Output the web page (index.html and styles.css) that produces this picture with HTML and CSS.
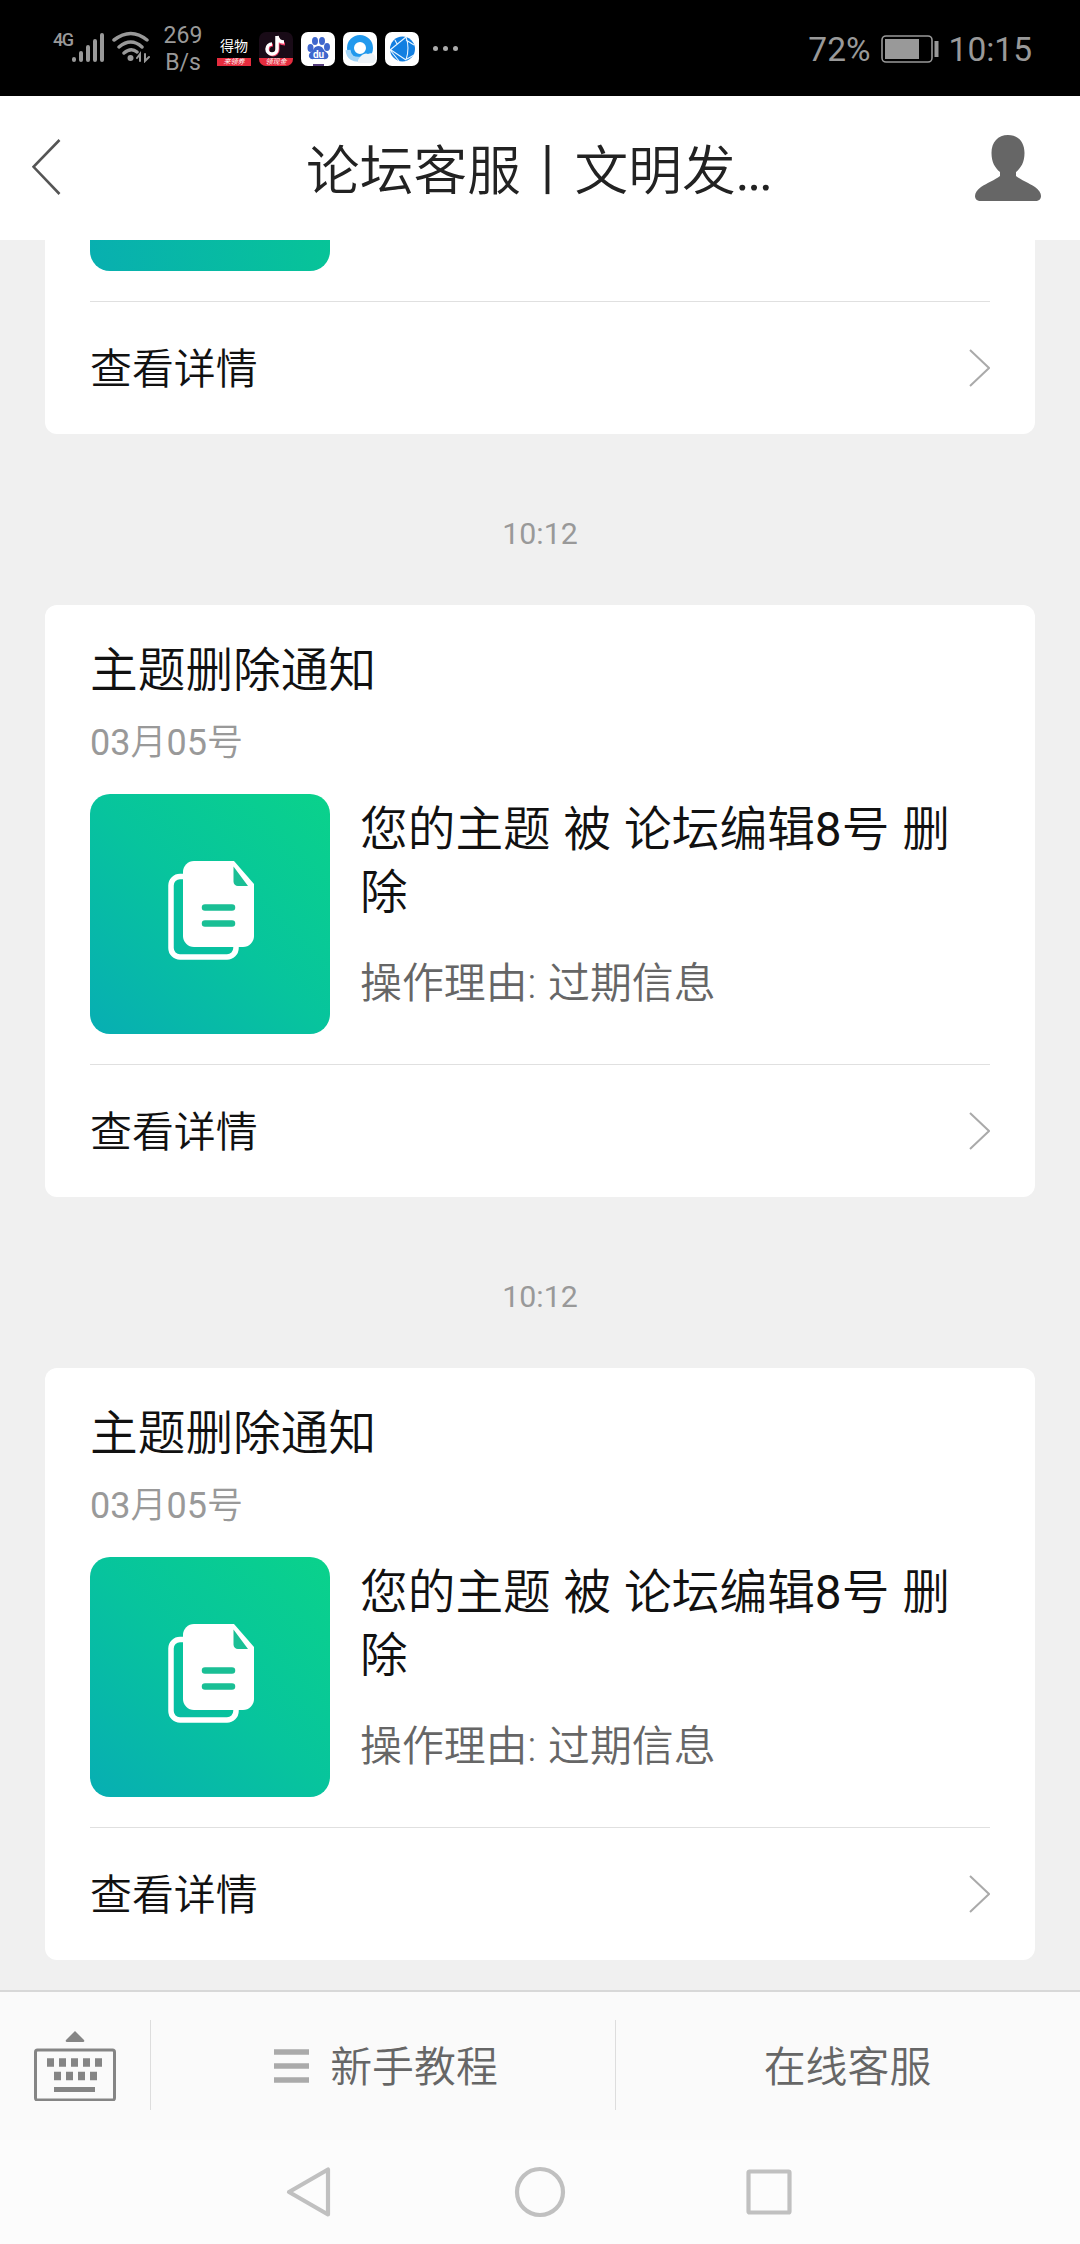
FILE: index.html
```html
<!DOCTYPE html>
<html lang="zh-CN">
<head>
<meta charset="utf-8">
<title>论坛客服</title>
<link rel="stylesheet" href="styles.css">
</head>
<body>
<svg class="defs" width="0" height="0" aria-hidden="true">
  <symbol id="docs" viewBox="0 0 86 100">
    <path d="M17 15.500H12A9 9 0 0 0 3 24.500V87A9 9 0 0 0 12 96H59A9 9 0 0 0 68 87V85" fill="none" stroke="#fff" stroke-width="5.500"/>
    <path d="M26 0H66L86 23V75A11 11 0 0 1 75 86H26A11 11 0 0 1 15 75V11A11 11 0 0 1 26 0Z" fill="#fff"/>
    <path d="M65.500 5.500L80 25H70A4.500 4.500 0 0 1 65.500 20.500Z" fill="#1abf95"/>
    <path d="M37 46.500H64M37 62.500H64" stroke="#1abf95" stroke-width="6.500" stroke-linecap="round"/>
  </symbol>
</svg>
<div class="screen">
  <div class="status">
    <div class="status-left">
      <span class="net">4G</span>
      <svg class="signal" width="34" height="32" viewBox="0 0 34 32" fill="none" stroke="#999" stroke-width="4" stroke-linecap="round"><path d="M3 27V28M10 21V28M17 15V28M24 9V28M31 3V28"/></svg>
      <svg class="wifi" width="38" height="32" viewBox="0 0 38 32" fill="none" stroke="#999" stroke-width="3.500" stroke-linecap="round"><path d="M2 9Q19-4 35 9M7 16Q19 6 30 16M12 22Q19 16 25 21"/><circle cx="18.500" cy="27" r="3" fill="#999" stroke="none"/><path d="M28 30V23L25 27M33 23V30L37 26" stroke-width="2"/></svg>
      <span class="speed"><span>269</span><span>B/s</span></span>
      <span class="apps">
        <span class="app app-dewu"><b>得物</b><i>来领券</i></span>
        <span class="app app-tiktok"><svg width="34" height="26" viewBox="0 0 34 26" fill="none"><path d="M18 5V17A5 5 0 1 1 13 12M18 5Q19 11 25 11" stroke="#ee4068" stroke-width="3" transform="translate(1 1)"/><path d="M18 4V17A5 5 0 1 1 13 12M18 4Q19 10 25 10" stroke="#fff" stroke-width="3.500"/></svg><i>领现金</i></span>
        <span class="app app-baidu"><svg width="34" height="34" viewBox="0 0 34 34" fill="#3f67cd"><ellipse cx="9.500" cy="16" rx="3" ry="4"/><ellipse cx="14" cy="9" rx="3" ry="4"/><ellipse cx="21" cy="9" rx="3" ry="4"/><ellipse cx="26" cy="15" rx="3" ry="4"/><path d="M17.500 14C13 14 13 18 10 20C6 23 8 28 13 27H22C28 28 29 23 25 20C22 18 22 14 17.500 14Z"/><path d="M12 32H23V34H12Z" fill="#533b79"/><text x="17.500" y="26" text-anchor="middle" class="du">du</text></svg></span>
        <span class="app"><svg width="34" height="34" viewBox="0 0 34 34"><circle cx="17" cy="16" r="9.500" fill="none" stroke="#2299ed" stroke-width="7"/><path d="M5 18Q6 29 19 27" fill="none" stroke="#a3d5f7" stroke-width="5"/><path d="M15 28Q20 20 25 22Q31 19 33 27L31 31H15Z" fill="#eef3f7"/></svg></span>
        <span class="app"><svg width="34" height="34" viewBox="0 0 34 34"><circle cx="17.500" cy="17" r="12.500" fill="#127fe1"/><path d="M5 18L21 5M6 18L21 28M21 5Q25 16 21 28M21 8L29 13M22 27L29 23M10 8L12 12M5 18L14 29" fill="none" stroke="#e8f5ff" stroke-width="1.100"/></svg></span>
      </span>
      <span class="more"><u></u><u></u><u></u></span>
    </div>
    <div class="status-right">
      <span>72%</span>
      <svg width="58" height="28" viewBox="0 0 58 28"><rect x="1" y="1" width="50" height="26" rx="4" fill="none" stroke="#999" stroke-width="1.600"/><path d="M4 4H38V24H4ZM53.500 6H57.500V22H53.500Z" fill="#999"/></svg>
      <span>10:15</span>
    </div>
  </div>

  <header class="header">
    <svg class="back" width="30" height="56" viewBox="0 0 30 56"><path d="M27.500 1L1.500 27.800L27.500 55" fill="none" stroke="#555" stroke-width="2.600"/></svg>
    <h1>论坛客服丨文明发<span class="dots">...</span></h1>
    <svg class="person" width="66" height="66" viewBox="0 0 66 66"><path d="M33 0C43 0 49.500 7 49.500 18C49.500 27 46 33 41 37V41C46 45 54 48 60 52C64 55 66 58 66 61C66 64 64 66 60 66H6C2 66 0 64 0 61C0 58 2 55 6 52C12 48 20 45 25 41V37C20 33 16.500 27 16.500 18C16.500 7 23 0 33 0Z" fill="#666"/></svg>
  </header>

  <main class="feed">
    <section class="card card-cut">
      <div class="tile"></div>
      <a class="detail"><span>查看详情</span><svg width="22" height="38" viewBox="0 0 22 38"><path d="M2 1L21 19L2 37" fill="none" stroke="#aaa" stroke-width="2"/></svg></a>
    </section>
    <time>10:12</time>
    <section class="card">
      <h2>主题删除通知</h2>
      <p class="date"><span class="num">03</span>月<span class="num">05</span>号</p>
      <div class="body">
        <div class="tile"><svg width="86" height="100"><use href="#docs"/></svg></div>
        <div class="copy"><p class="subject">您的主题 被 论坛编辑<span class="num">8</span>号 删除</p><p class="reason">操作理由: 过期信息</p></div>
      </div>
      <a class="detail"><span>查看详情</span><svg width="22" height="38" viewBox="0 0 22 38"><path d="M2 1L21 19L2 37" fill="none" stroke="#aaa" stroke-width="2"/></svg></a>
    </section>
    <time>10:12</time>
    <section class="card">
      <h2>主题删除通知</h2>
      <p class="date"><span class="num">03</span>月<span class="num">05</span>号</p>
      <div class="body">
        <div class="tile"><svg width="86" height="100"><use href="#docs"/></svg></div>
        <div class="copy"><p class="subject">您的主题 被 论坛编辑<span class="num">8</span>号 删除</p><p class="reason">操作理由: 过期信息</p></div>
      </div>
      <a class="detail"><span>查看详情</span><svg width="22" height="38" viewBox="0 0 22 38"><path d="M2 1L21 19L2 37" fill="none" stroke="#aaa" stroke-width="2"/></svg></a>
    </section>
  </main>

  <footer class="toolbar">
    <div class="keyboard"><svg width="82" height="70" viewBox="0 0 82 70"><path d="M41 0L50 9Q51 11 49 11H33Q31 11 32 9Z" fill="#858585"/><rect x="1.500" y="19" width="79" height="50" rx="2" fill="none" stroke="#858585" stroke-width="3"/><path d="M13 31.500H70" stroke="#858585" stroke-width="8.500" stroke-dasharray="7 5"/><path d="M20 45H63" stroke="#858585" stroke-width="8.500" stroke-dasharray="7 5"/><path d="M20 58.500H61" stroke="#858585" stroke-width="5"/></svg></div>
    <div class="entry"><svg width="36" height="36" viewBox="0 0 36 36"><path d="M1 5H36M1 19H36M1 33H36" stroke="#aaa" stroke-width="5.500"/></svg><span>新手教程</span></div>
    <div class="entry entry-last"><span>在线客服</span></div>
  </footer>
  <nav class="nav">
    <svg width="50" height="52" viewBox="0 0 50 52"><path d="M42 3.500V48.500L3 26Z"/></svg>
    <svg width="52" height="52" viewBox="0 0 52 52"><circle cx="26" cy="26" r="23"/></svg>
    <svg width="50" height="52" viewBox="0 0 50 52"><rect x="4.500" y="5.500" width="41" height="41" rx="1"/></svg>
  </nav>
</div>
</body>
</html>
```
FILE: styles.css
```css
* { box-sizing: border-box; }
body, h1, h2, p { margin: 0; font-weight: 350; }
body { font-family: Roboto, "Noto Sans CJK SC", sans-serif; background: #f0f0f0; }
.num, .dots { font-weight: 400; }
.defs { display: block; height: 0; }
.screen { width: 1080px; height: 2244px; display: flex; flex-direction: column; overflow: hidden; }

.status { height: 96px; flex: none; background: #000; color: #999; display: flex; justify-content: space-between; font-weight: 400; }
.status-left { display: flex; padding: 24px 0 0 53px; align-items: flex-start; }
.net { width: 18px; font-size: 18px; line-height: 18px; margin-top: 7px; letter-spacing: -1.5px; font-weight: 500; }
.signal { margin-top: 8px; }
.wifi { margin: 7px 0 0 7px; }
.speed { width: 55px; display: flex; flex-direction: column; text-align: center; font-size: 23px; line-height: 27px; margin-top: -2px; padding-left: 11px; }
.apps { display: flex; gap: 8px; margin: 8px 0 0 12px; }
.app { width: 34px; height: 34px; border-radius: 7px; background: #fff; overflow: hidden; display: flex; flex-direction: column; align-items: center; }
.app svg { display: block; flex: none; }
.app i { width: 34px; height: 8px; background: #e52c3e; color: #fff; font-size: 7px; line-height: 8px; text-align: center; }
.app-dewu { background: #000; border-radius: 0; }
.app-dewu b { height: 26px; color: #fff; font-size: 14px; line-height: 28px; font-weight: 400; white-space: nowrap; }
.app-tiktok { background: #190b17; }
.du { font-size: 10px; font-weight: 700; fill: #fff; }
.more { display: flex; gap: 5px; margin: 22px 0 0 14px; }
.more u { width: 5px; height: 5px; border-radius: 50%; background: #aaa; }
.status-right { display: flex; align-items: center; padding: 2px 48px 0 0; gap: 10px; font-size: 33.5px; }

.header { height: 144px; flex: none; background: #fff; display: flex; justify-content: space-between; align-items: flex-start; padding: 39px 39px 0 32px; }
.back { margin-top: 4px; }
.header h1 { font-size: 53.7px; line-height: 72px; color: #222; margin: 1px 0 0 40px; white-space: nowrap; }
.dots { letter-spacing: -2.4px; }

.feed { height: 1750px; flex: none; padding: 0 45px; overflow: hidden; }
.card { height: 592px; background: #fff; border-radius: 12px; padding: 34px 45px 0; }
.card-cut { height: 194px; padding-top: 0; border-radius: 0 0 12px 12px; }
.card h2 { font-size: 47.7px; line-height: 64px; height: 62px; color: #111; }
.date { font-size: 36px; line-height: 48px; color: #999; margin-top: 18px; height: 75px; }
.body { display: flex; gap: 30px; }
.tile { width: 240px; height: 240px; flex: none; border-radius: 20px; background: linear-gradient(45deg, #07aeb3 0%, #07c49d 50%, #0ad28b 100%); display: flex; align-items: center; justify-content: center; padding: 0 0 6px 2px; }
.card-cut .tile { height: 31px; border-radius: 0 0 20px 20px; background: linear-gradient(80deg, #08afb0, #07c498); }
.copy { padding-top: 5px; }
.subject { font-size: 47.7px; line-height: 63px; color: #111; word-spacing: 1.2px; }
.reason { font-size: 41.9px; line-height: 56px; color: #666; margin-top: 31px; word-spacing: 1.5px; }
.detail { height: 132px; margin-top: 30px; border-top: 1px solid #e0e0e0; display: flex; justify-content: space-between; align-items: center; font-size: 41.9px; line-height: 60px; color: #111; font-weight: 350; }
.detail span { padding-top: 5px; }
.feed time { display: block; height: 171px; line-height: 200px; text-align: center; font-size: 30.3px; color: #999; font-weight: 400; }

.toolbar { height: 150px; flex: none; background: #fafafa; border-top: 2px solid #d8d8d8; display: flex; align-items: center; }
.keyboard { width: 150px; display: flex; justify-content: center; }
.entry { width: 465px; height: 90px; margin-bottom: 2px; border-left: 1px solid #ddd; display: flex; align-items: center; justify-content: center; gap: 21px; font-size: 41.9px; line-height: 60px; color: #666; font-weight: 350; padding: 0 0 0 5px; }
.entry-last { padding: 0 1px 0 0; }
.entry span { padding-top: 5px; }
.nav { height: 104px; flex: none; background: #fcfcfc; display: flex; justify-content: center; gap: 178px; align-items: center; }
.nav svg { fill: none; stroke: #c0c0c0; stroke-width: 4.2px; stroke-linejoin: round; }
```
